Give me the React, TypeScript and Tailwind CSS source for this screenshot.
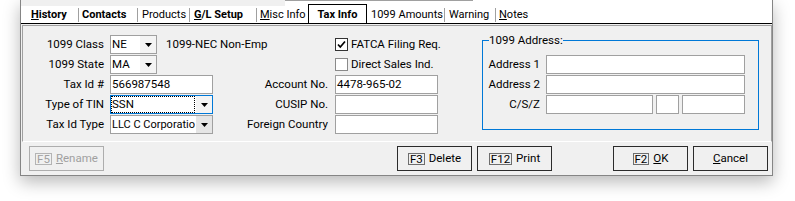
import type { ReactNode } from "react"

const font = "font-['Roboto',sans-serif]"

function Caret() {
  return (
    <svg width="7" height="4" viewBox="0 0 7 4">
      <polygon points="0,0 7,0 3.5,4" fill="#000" />
    </svg>
  )
}

function Combo({
  value,
  width,
  focused = false,
  grayButton = false,
  textSize = "",
}: {
  value: string
  width: string
  focused?: boolean
  grayButton?: boolean
  textSize?: string
}) {
  return (
    <div
      className={`flex h-[19px] shrink-0 ${width} border bg-white ${
        focused ? "border-[#0078d7]" : "border-[#a0a0a0]"
      }`}
    >
      <div className={`min-w-0 flex-1 overflow-hidden whitespace-nowrap leading-[17px] ${textSize}`}>
        {focused ? (
          <span className="block h-[17px] border border-dotted border-black leading-[15px]">
            {value}
          </span>
        ) : (
          <span className="pl-[1px]">{value}</span>
        )}
      </div>
      <div
        className={`ml-[1px] flex w-[16px] shrink-0 items-center justify-center ${
          grayButton ? "bg-[#e5e5e5]" : "bg-[#f4f4f4]"
        }`}
      >
        <Caret />
      </div>
    </div>
  )
}

function Field({ value = "", width }: { value?: string; width: string }) {
  return (
    <div
      className={`h-[19px] shrink-0 ${width} overflow-hidden whitespace-nowrap border border-[#a0a0a0] bg-white pl-[1px] leading-[17px]`}
    >
      {value}
    </div>
  )
}

function Check({ checked, dark }: { checked: boolean; dark: boolean }) {
  return (
    <div
      className={`flex h-[13px] w-[13px] shrink-0 items-center justify-center border bg-white ${
        dark ? "border-[#333333]" : "border-[#8a8a8a]"
      }`}
    >
      {checked && (
        <svg width="11" height="11" viewBox="0 0 11 11">
          <path d="M2 5.5 L4.3 8 L9 2.5" fill="none" stroke="#000" strokeWidth="1.7" />
        </svg>
      )}
    </div>
  )
}

function Label({ children, pr }: { children: ReactNode; pr: string }) {
  return (
    <div className={`whitespace-nowrap text-right leading-[19px] ${pr}`}>{children}</div>
  )
}

function Key({ k, disabled = false }: { k: string; disabled?: boolean }) {
  return (
    <span
      className={`inline-flex h-[12px] items-center border px-[1px] leading-[10px] ${
        disabled ? "border-[#b4b4b4]" : "border-[#6e6e6e]"
      }`}
    >
      {k}
    </span>
  )
}

function Button({
  keyName,
  children,
  disabled = false,
}: {
  keyName?: string
  children: ReactNode
  disabled?: boolean
}) {
  return (
    <button
      type="button"
      className={`flex h-[25px] w-[75px] items-center justify-center gap-[4px] border bg-[#f0f0f0] text-[11.5px] ${
        disabled
          ? "border-[#adadad] text-[#a0a0a0]"
          : "border-[#2b2b2b] text-black"
      }`}
    >
      {keyName && <Key k={keyName} disabled={disabled} />}
      <span>{children}</span>
    </button>
  )
}

function Sep() {
  return <div className="h-[14px] w-[1px] self-center bg-[#a0a0a0]" />
}

function Tab({
  children,
  width,
  pl,
  bold = false,
}: {
  children: ReactNode
  width: string
  pl: string
  bold?: boolean
}) {
  return (
    <div
      className={`${width} ${pl} whitespace-nowrap pt-[1px] leading-[16px] ${
        bold ? "font-bold" : ""
      }`}
    >
      {children}
    </div>
  )
}

export default function App() {
  return (
    <div className={`h-[201px] w-[795px] overflow-hidden bg-white text-[11.5px] text-black ${font}`}>
      <div className="ml-[20px] w-[753px] border-x border-b border-[#858585] bg-[#f0f0f0] shadow-[0_6px_16px_rgba(0,0,0,0.28)]">
        {/* strip above the tabs */}
        <div className="flex h-[6px]">
          <div className="w-[264px] bg-[#f0f0f0]" />
          <div className="flex-1 bg-white">
            <div className="h-[1px] w-[188px] border-b border-[#a0a0a0]" />
          </div>
        </div>

        {/* tab strip */}
        <div className="flex h-[17px] bg-white text-[11px]">
          <Tab width="w-[57px]" pl="pl-[10px]" bold>
            <u>H</u>istory
          </Tab>
          <Sep />
          <Tab width="w-[58px]" pl="pl-[3px]" bold>
            Contacts
          </Tab>
          <Sep />
          <Tab width="w-[51px]" pl="pl-[4px]">
            Products
          </Tab>
          <Sep />
          <Tab width="w-[66px]" pl="pl-[4px]" bold>
            <u>G</u>/L Setup
          </Tab>
          <Sep />
          <Tab width="w-[51px]" pl="pl-[3px]">
            <u>M</u>isc Info
          </Tab>
          <div className="relative -mt-[2px] h-[19px] w-[59px] border-x border-t border-black bg-white pt-[2px] text-center font-bold leading-[16px]">
            Tax Info
          </div>
          <Tab width="w-[77px]" pl="pl-[4px]">
            1099 Amounts
          </Tab>
          <Sep />
          <Tab width="w-[50px]" pl="pl-[4px]">
            Warning
          </Tab>
          <Sep />
          <Tab width="w-[60px]" pl="pl-[3px]">
            <u>N</u>otes
          </Tab>
        </div>
        <div className="h-[1px] bg-black" />
        <div className="h-[1px]" />

        {/* tab page */}
        <div className="ml-[1px] flex h-[117px] items-start border-x border-t border-b border-[#a0a0a0] border-b-white">
          <div className="mt-[9px] grid grid-cols-[87px_109px_116px_103px] gap-y-[1px]">
            <Label pr="pr-[6px]">1099 Class</Label>
            <div className="flex items-center">
              <Combo value="NE" width="w-[47px]" />
              <span className="ml-[9px] whitespace-nowrap">1099-NEC Non-Emp</span>
            </div>
            <div />
            <div className="flex items-center gap-[3px]">
              <Check checked dark />
              <span className="whitespace-nowrap">FATCA Filing Req.</span>
            </div>

            <Label pr="pr-[6px]">1099 State</Label>
            <Combo value="MA" width="w-[47px]" />
            <div />
            <div className="flex items-center gap-[3px]">
              <Check checked={false} dark={false} />
              <span className="whitespace-nowrap">Direct Sales Ind.</span>
            </div>

            <Label pr="pr-[6px]">Tax Id #</Label>
            <Field value="566987548" width="w-[103px]" />
            <Label pr="pr-[7px]">Account No.</Label>
            <Field value="4478-965-02" width="w-[103px]" />

            <Label pr="pr-[6px]">Type of TIN</Label>
            <Combo value="SSN" width="w-[103px]" focused />
            <Label pr="pr-[7px]">CUSIP No.</Label>
            <Field width="w-[103px]" />

            <Label pr="pr-[6px]">Tax Id Type</Label>
            <Combo value="LLC C Corporatio" width="w-[103px]" grayButton textSize="text-[11px]" />
            <Label pr="pr-[7px]">Foreign Country</Label>
            <Field width="w-[103px]" />
          </div>

          <fieldset className="ml-[44px] mt-[6px] w-[277px] border border-[#0078d7] pb-[15px]">
            <legend className="ml-[6px] leading-[16px]">1099 Address:</legend>
            <div className="mt-[7px] grid grid-cols-[63px_199px] gap-y-[1px]">
              <Label pr="pr-[6px]">Address 1</Label>
              <Field width="w-[199px]" />
              <Label pr="pr-[6px]">Address 2</Label>
              <Field width="w-[199px]" />
              <Label pr="pr-[6px]">C/S/Z</Label>
              <div className="flex gap-[3px]">
                <Field width="w-[107px]" />
                <Field width="w-[23px]" />
                <Field width="w-[63px]" />
              </div>
            </div>
          </fieldset>
        </div>

        {/* buttons */}
        <div className="flex px-[8px] pb-[4px] pt-[4px] pr-[4px]">
          <Button keyName="F5" disabled>
            <u>R</u>ename
          </Button>
          <div className="ml-[293px] flex gap-[5px]">
            <Button keyName="F3">Delete</Button>
            <Button keyName="F12">Print</Button>
          </div>
          <div className="ml-[61px] flex gap-[5px]">
            <Button keyName="F2">
              <u>O</u>K
            </Button>
            <Button>
              <u>C</u>ancel
            </Button>
          </div>
        </div>
      </div>
    </div>
  )
}
